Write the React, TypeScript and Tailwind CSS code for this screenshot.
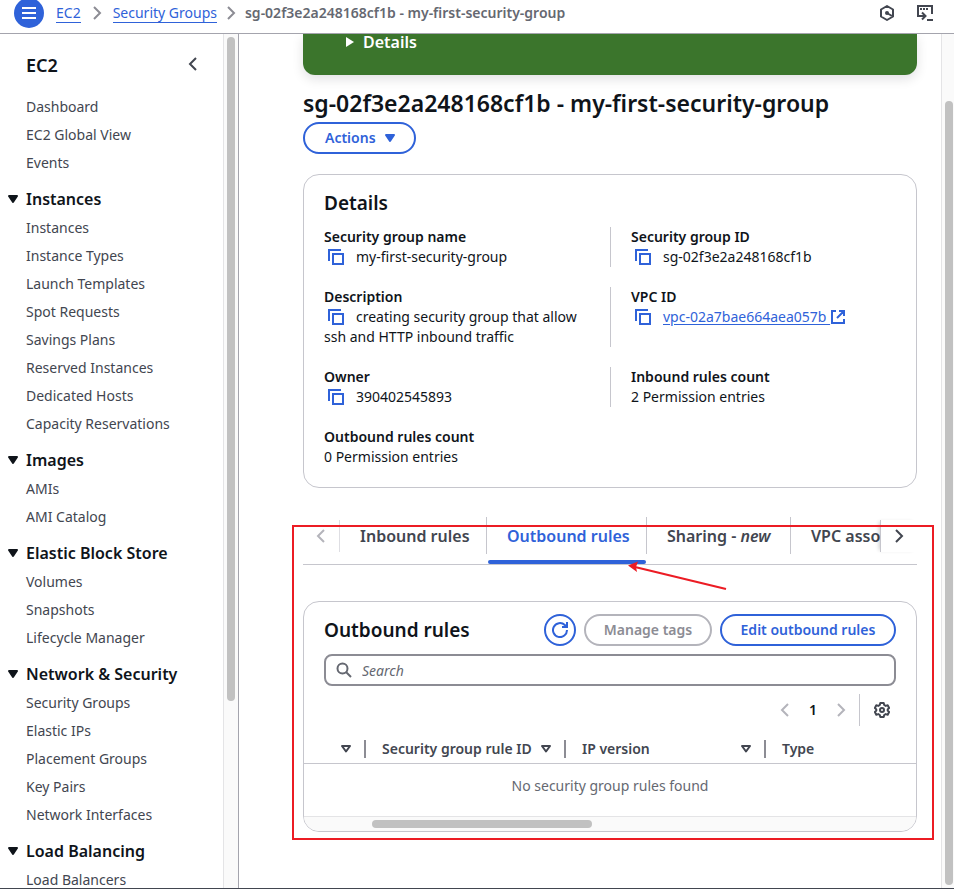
import React from "react";

type IconProps = { className?: string };

const stroke = {
  fill: "none",
  stroke: "currentColor",
  strokeWidth: 2,
} as const;

function Chevron({ dir, className }: IconProps & { dir: "left" | "right" }) {
  return (
    <svg viewBox="0 0 16 16" className={`size-4 shrink-0 ${className ?? ""}`} aria-hidden="true">
      <path {...stroke} d={dir === "left" ? "M11 2 5 8l6 6" : "M5 2l6 6-6 6"} />
    </svg>
  );
}

function CaretDown({ className }: IconProps) {
  return (
    <svg viewBox="0 0 16 16" className={`size-4 shrink-0 ${className ?? ""}`} aria-hidden="true">
      <path d="M4 5h8l-4 6z" fill="currentColor" stroke="currentColor" strokeWidth="2" strokeLinejoin="round" />
    </svg>
  );
}

function SortCaret() {
  return (
    <svg viewBox="0 0 16 16" className="size-4 shrink-0" aria-hidden="true">
      <path {...stroke} d="M4 5h8l-4 5.500z" strokeLinejoin="round" />
    </svg>
  );
}

function CopyIcon() {
  return (
    <svg viewBox="0 0 16 16" className="size-4" aria-hidden="true">
      <path {...stroke} d="M1 12V1h12" />
      <path {...stroke} d="M5 5h10v10H5z" />
    </svg>
  );
}

function ExternalIcon() {
  return (
    <svg viewBox="0 0 16 16" className="inline-block size-4 align-[-3px]" aria-hidden="true">
      <path {...stroke} d="M6 2H2v12h12v-4M9 2h5v5M14 2 7 9" />
    </svg>
  );
}

function GearIcon() {
  return (
    <svg viewBox="0 0 16 16" className="size-4" aria-hidden="true">
      <path
        {...stroke}
        strokeLinejoin="round"
        d="M6.300 1h3.400l.5 2 1.500.9 2-.6 1.400 2.700L13.700 7.400v1.200l1.400 1.400-1.400 2.700-2-.6-1.500.9-.5 2H6.300l-.5-2-1.500-.9-2 .6L.9 10l1.400-1.400V7.400L.9 6l1.400-2.700 2 .6L5.800 3z"
      />
      <circle cx="8" cy="8" r="2" {...stroke} />
    </svg>
  );
}

function RefreshIcon() {
  return (
    <svg viewBox="0 0 16 16" className="size-4" aria-hidden="true">
      <path {...stroke} d="M15 8a7 7 0 1 1-2.200-5L15 5" />
      <path {...stroke} d="M15 0v5h-5" />
    </svg>
  );
}

function SearchIcon() {
  return (
    <svg viewBox="0 0 16 16" className="size-4 shrink-0 text-[#656871]" aria-hidden="true">
      <circle cx="6.500" cy="6.500" r="5" {...stroke} />
      <path {...stroke} d="m10 10 5 5" />
    </svg>
  );
}

function AssistantIcon() {
  return (
    <svg viewBox="0 0 16 16" className="size-4" aria-hidden="true">
      <path {...stroke} strokeLinejoin="round" d="M8 1l6 3.500v7L8 15l-6-3.500v-7z" />
      <circle cx="8" cy="8" r="2" fill="currentColor" />
      <path {...stroke} d="m8 8 5 3" />
    </svg>
  );
}

function ShellIcon() {
  return (
    <svg viewBox="0 0 18 18" className="size-[18px]" aria-hidden="true">
      <path {...stroke} d="M5 12H2V2h14v8M4 12h5M6 8.500 9.500 12 6 15.500M11 16h6" />
      <path d="M4 4h2v2H4zM7 4h2v2H7zM10 4h2v2h-2z" fill="currentColor" />
    </svg>
  );
}

const sections = [
  {
    title: "Instances",
    items: [
      "Instances",
      "Instance Types",
      "Launch Templates",
      "Spot Requests",
      "Savings Plans",
      "Reserved Instances",
      "Dedicated Hosts",
      "Capacity Reservations",
    ],
  },
  { title: "Images", items: ["AMIs", "AMI Catalog"] },
  { title: "Elastic Block Store", items: ["Volumes", "Snapshots", "Lifecycle Manager"] },
  {
    title: "Network & Security",
    items: ["Security Groups", "Elastic IPs", "Placement Groups", "Key Pairs", "Network Interfaces"],
  },
  { title: "Load Balancing", items: ["Load Balancers"] },
];

function NavList({ items }: { items: string[] }) {
  return (
    <ul>
      {items.map((item) => (
        <li key={item} className="h-7 py-1 pl-[26px] text-sm leading-5 text-[#424650]">
          <a href="#">{item}</a>
        </li>
      ))}
    </ul>
  );
}

function Sidebar() {
  return (
    <aside className="flex w-[239px] shrink-0 border-r border-[#a4a4ad]">
      <nav className="min-w-0 flex-1 overflow-hidden" aria-label="EC2">
        <div className="flex h-[59px] items-start justify-between pt-[19px] pr-[22px] pl-[26px]">
          <h2 className="text-lg leading-6 font-semibold">
            <a href="#">EC2</a>
          </h2>
          <button type="button" aria-label="Close navigation" className="pt-[3px] text-[#424650]">
            <Chevron dir="left" />
          </button>
        </div>
        <NavList items={["Dashboard", "EC2 Global View", "Events"]} />
        {sections.map((s) => (
          <section key={s.title}>
            <h3 className="pt-[11px] pb-1 text-base leading-[22px] font-semibold">
              <button type="button" className="flex items-center gap-[5px] pl-[5px]">
                <CaretDown />
                {s.title}
              </button>
            </h3>
            <NavList items={s.items} />
          </section>
        ))}
      </nav>
      <div className="w-[15px] border-l border-[#e4e4e6] bg-[#fafafa] pt-[3px] pl-[3px]">
        <div className="h-[78%] w-2 rounded-full bg-[#c1c1c1]" />
      </div>
    </aside>
  );
}

function CopyButton({ label }: { label: string }) {
  return (
    <button type="button" aria-label={`Copy ${label}`} className="mr-3 ml-1 inline-flex align-[-3px] text-[#2f62d9]">
      <CopyIcon />
    </button>
  );
}

function Field({ label, divided, copy, children }: { label: string; divided?: boolean; copy?: boolean; children: React.ReactNode }) {
  return (
    <div className={divided ? "border-l border-[#c6c6cd] pl-5" : "pr-5"}>
      <dt className="font-semibold">{label}</dt>
      <dd>
        {copy && <CopyButton label={label} />}
        {children}
      </dd>
    </div>
  );
}

function DetailsCard() {
  return (
    <section className="mt-5 rounded-2xl border border-[#c6c6cd] px-5 pt-4 pb-5">
      <h2 className="text-[19px] leading-6 font-semibold">Details</h2>
      <dl className="mt-3 grid grid-cols-2 gap-y-5 text-sm leading-5">
        <Field label="Security group name" copy>my-first-security-group</Field>
        <Field label="Security group ID" copy divided>sg-02f3e2a248168cf1b</Field>
        <Field label="Description" copy>creating security group that allow ssh and HTTP inbound traffic</Field>
        <Field label="VPC ID" copy divided>
          <a href="#" className="text-[#2f62d9] underline underline-offset-2">
            vpc-02a7bae664aea057b <ExternalIcon />
          </a>
        </Field>
        <Field label="Owner" copy>390402545893</Field>
        <Field label="Inbound rules count" divided>2 Permission entries</Field>
        <Field label="Outbound rules count">0 Permission entries</Field>
      </dl>
    </section>
  );
}

function Tabs() {
  const tab = "h-[37px] shrink-0 whitespace-nowrap pt-px px-5";
  return (
    <div className="flex h-12 border-b border-[#c6c6cd] text-base font-semibold text-[#424650]">
      <button type="button" aria-label="Scroll left" className="mt-[3px] flex h-8 w-[37px] shrink-0 items-center justify-center border-r border-[#dedee3] text-[#b4b4bb]">
        <Chevron dir="left" />
      </button>
      <div role="tablist" className="flex min-w-0 flex-1 overflow-hidden">
        <button type="button" role="tab" className={`${tab} w-[147px] border-r border-[#c6c6cd]`}>Inbound rules</button>
        <div className="flex w-[160px] shrink-0 flex-col">
          <button type="button" role="tab" aria-selected="true" className={`${tab} border-r border-[#c6c6cd] text-[#2f62d9]`}>Outbound rules</button>
          <div className="mt-auto mr-px ml-px h-1 rounded-sm bg-[#2f62d9]" />
        </div>
        <button type="button" role="tab" className={`${tab} w-36 border-r border-[#c6c6cd]`}>
          Sharing - <em>new</em>
        </button>
        <button type="button" role="tab" className={tab}>VPC associations</button>
      </div>
      <button type="button" aria-label="Scroll right" className="mt-[3px] flex h-8 w-[37px] shrink-0 items-center justify-center border-l border-[#c6c6cd] shadow-[-3px_0_4px_-2px_rgba(0,0,0,0.2)]">
        <Chevron dir="right" />
      </button>
    </div>
  );
}

function HeaderCell({ label, className, last }: { label?: string; className?: string; last?: boolean }) {
  return (
    <th scope="col" className={`p-0 pb-[5px] font-semibold ${className ?? ""}`}>
      <div className={`flex h-[18px] items-center justify-between pl-4 ${last ? "" : "border-r-2 border-[#8c8c94] pr-[10px]"}`}>
        <span>{label}</span>
        {!last && <SortCaret />}
      </div>
    </th>
  );
}

function RulesCard() {
  const pill = "h-8 rounded-full border-2 text-center text-sm font-semibold whitespace-nowrap";
  return (
    <section className="mt-9 overflow-hidden rounded-2xl border border-[#c6c6cd]">
      <div className="px-5 pt-3">
        <div className="flex items-center gap-2">
          <h2 className="flex-1 text-[19px] leading-6 font-semibold">Outbound rules</h2>
          <button type="button" aria-label="Refresh" className="flex size-8 items-center justify-center rounded-full border-2 border-[#2f62d9] text-[#2f62d9]">
            <RefreshIcon />
          </button>
          <button type="button" disabled className={`${pill} w-32 border-[#b4b4bb] text-[#8c8c94]`}>Manage tags</button>
          <button type="button" className={`${pill} w-44 border-[#2f62d9] text-[#2f62d9]`}>Edit outbound rules</button>
        </div>
        <label className="mt-2 flex h-8 items-center gap-[10px] rounded-lg border-2 border-[#8c8c94] px-[10px]">
          <SearchIcon />
          <input
            type="search"
            aria-label="Search"
            placeholder="Search"
            className="min-w-0 flex-1 pt-px text-sm italic outline-none placeholder:text-[#656871]"
          />
        </label>
        <div className="mt-2 flex h-8 items-center justify-end">
          <button type="button" aria-label="Previous page" className="text-[#b4b4bb]"><Chevron dir="left" /></button>
          <button type="button" className="w-10 text-sm font-semibold">1</button>
          <button type="button" aria-label="Next page" className="text-[#b4b4bb]"><Chevron dir="right" /></button>
          <span className="ml-[10px] h-8 w-px bg-[#c6c6cd]" />
          <button type="button" aria-label="Preferences" className="mr-[6px] ml-[14px] text-[#424650]"><GearIcon /></button>
        </div>
      </div>
      <table className="mt-[14px] w-full table-fixed border-collapse text-left text-sm leading-5">
        <thead>
          <tr className="border-b border-[#c6c6cd] text-[#424650]">
            <HeaderCell className="w-[62px]" />
            <HeaderCell className="w-[200px]" label="Security group rule ID" />
            <HeaderCell className="w-[200px]" label="IP version" />
            <HeaderCell label="Type" last />
          </tr>
        </thead>
        <tbody>
          <tr>
            <td colSpan={4} className="h-[52px] pb-2 text-center text-[#656871]">No security group rules found</td>
          </tr>
        </tbody>
      </table>
      <div className="h-[15px] border-t border-[#e4e4e6] bg-[#fafafa] pt-[3px]">
        <div className="ml-[68px] h-2 w-[36%] rounded-full bg-[#c1c1c1]" />
      </div>
    </section>
  );
}

function Highlight() {
  return (
    <div className="pointer-events-none" aria-hidden="true">
      <div className="absolute top-2 -right-[17px] -bottom-2 -left-[11px] border-2 border-[#ec1c24]" />
      <svg viewBox="0 0 100 30" className="absolute top-[44px] right-[190px] h-[30px] w-[100px]">
        <path d="M8 6 99 28" stroke="#ec1c24" strokeWidth="2.200" fill="none" />
        <path d="M1 4.500 11 0.500 9 6 10 11z" fill="#ec1c24" />
      </svg>
    </div>
  );
}

export default function App() {
  return (
    <div className="flex h-screen flex-col overflow-hidden border-b border-[#424650] bg-white font-['Noto_Sans',sans-serif] text-[#0f141a]">
      <header className="flex h-[34px] shrink-0 items-start justify-between overflow-hidden border-b border-[#a4a4ad] px-[14px]">
        <nav aria-label="Breadcrumb" className="flex h-[26px] items-center text-sm">
          <button type="button" aria-label="Open navigation" className="mr-3 flex size-[30px] items-center justify-center rounded-full bg-[#2f62d9] text-white">
            <svg viewBox="0 0 16 16" className="size-4" aria-hidden="true">
              <path {...stroke} d="M1 3h14M1 8h14M1 13h14" />
            </svg>
          </button>
          <a href="#" className="border-b border-[#2f62d9] leading-[18px] text-[#2f62d9]">EC2</a>
          <Chevron dir="right" className="mx-2 text-[#8c8c94]" />
          <a href="#" className="border-b border-[#2f62d9] leading-[18px] text-[#2f62d9]">Security Groups</a>
          <Chevron dir="right" className="mx-[6px] text-[#8c8c94]" />
          <span className="font-semibold text-[#656871]">sg-02f3e2a248168cf1b - my-first-security-group</span>
        </nav>
        <div className="flex h-[26px] items-center gap-[21px] pr-1.5 text-[#424650]">
          <button type="button" aria-label="Assistant"><AssistantIcon /></button>
          <button type="button" aria-label="CloudShell"><ShellIcon /></button>
        </div>
      </header>
      <div className="flex min-h-0 flex-1">
        <Sidebar />
        <main className="min-w-0 flex-1 overflow-hidden pr-6 pl-16">
          <div className="h-[41px] rounded-b-xl bg-[#3b752c] pl-[39px] shadow-[0_4px_12px_rgba(0,7,22,0.12)]">
            <button type="button" className="flex h-4 items-center gap-[5px] text-base leading-4 font-semibold text-white">
              <svg viewBox="0 0 16 16" className="size-4" aria-hidden="true">
                <path d="M4 3v10l8-5z" fill="currentColor" />
              </svg>
              Details
            </button>
          </div>
          <h1 className="mt-[13px] text-[23px] leading-[30px] font-semibold">sg-02f3e2a248168cf1b - my-first-security-group</h1>
          <button type="button" className="mt-1 flex h-8 items-center gap-[6px] rounded-full border-2 border-[#2f62d9] pr-4 pl-5 text-sm font-semibold text-[#2f62d9]">
            Actions
            <CaretDown />
          </button>
          <DetailsCard />
          <div className="relative mt-[29px]">
            <Tabs />
            <RulesCard />
            <Highlight />
          </div>
        </main>
        <div className="w-[13px] shrink-0 border-l border-[#e4e4e6] bg-[#fafafa] pt-[67px] pb-[3px] pl-[3px]">
          <div className="h-full w-2 rounded-full bg-[#c1c1c1]" />
        </div>
      </div>
    </div>
  );
}
